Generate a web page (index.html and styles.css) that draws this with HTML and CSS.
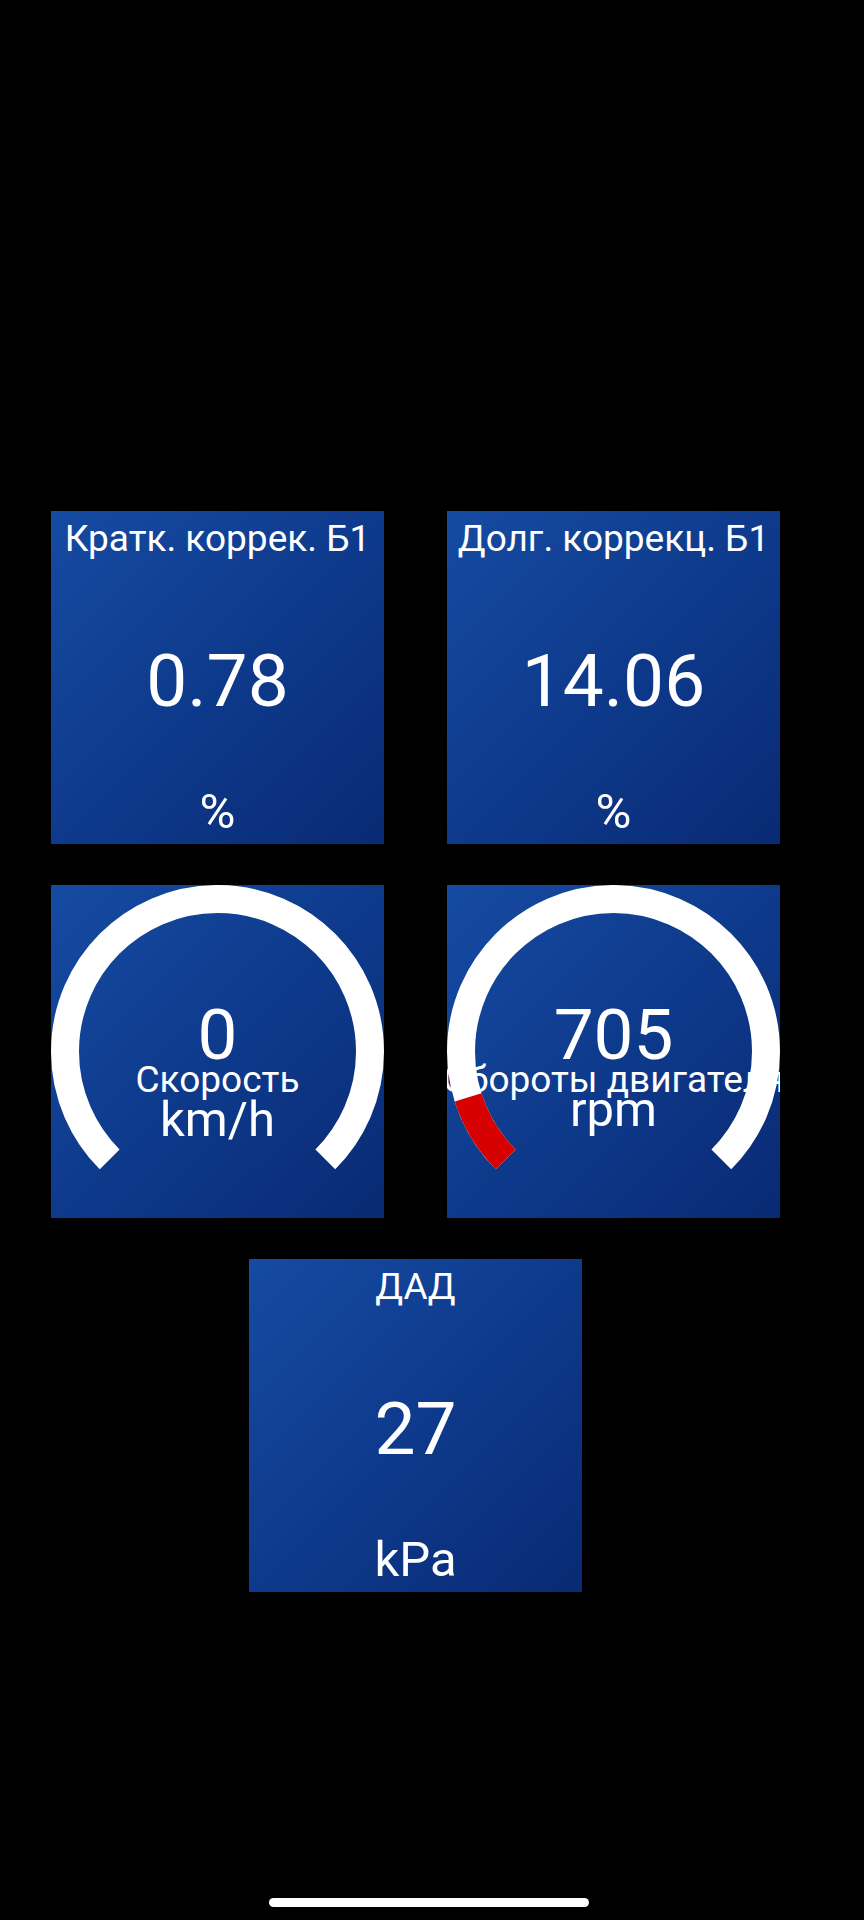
FILE: index.html
```html
<!DOCTYPE html>
<html lang="ru">
<head>
<meta charset="utf-8">
<title>OBD</title>
<link rel="stylesheet" href="styles.css">
</head>
<body>
<main class="screen">
  <section class="grid">
    <div class="tile tile--value">
      <div class="tile__title">Кратк. коррек. Б1</div>
      <div class="tile__value">0.78</div>
      <div class="tile__unit">%</div>
    </div>
    <div class="tile tile--value">
      <div class="tile__title">Долг. коррекц. Б1</div>
      <div class="tile__value">14.06</div>
      <div class="tile__unit">%</div>
    </div>
    <div class="tile tile--gauge">
      <svg class="gauge__svg" viewBox="0 0 333 333" aria-hidden="true">
        <path class="gauge__track" d="M58.67 274.33 A152.5 152.5 0 1 1 274.33 274.33"/>
      </svg>
      <div class="gauge__value">0</div>
      <div class="gauge__label">Скорость</div>
      <div class="gauge__unit">km/h</div>
    </div>
    <div class="tile tile--gauge gauge--rpm">
      <svg class="gauge__svg" viewBox="0 0 333 333" aria-hidden="true">
        <path class="gauge__track" d="M58.67 274.33 A152.5 152.5 0 1 1 274.33 274.33"/>
        <path class="gauge__fill" d="M58.67 274.33 A152.5 152.5 0 0 1 21.1 212.4"/>
      </svg>
      <div class="gauge__value">705</div>
      <div class="gauge__label">Обороты двигателя</div>
      <div class="gauge__unit">rpm</div>
    </div>
    <div class="tile tile--value tile--center">
      <div class="tile__title">ДАД</div>
      <div class="tile__value">27</div>
      <div class="tile__unit">kPa</div>
    </div>
  </section>
  <div class="home-indicator"></div>
</main>
</body>
</html>
```
FILE: styles.css
```css
html, body {
  margin: 0;
  padding: 0;
  background: #000;
}

body {
  font-family: Roboto, "Noto Sans", "Liberation Sans", sans-serif;
  color: #fff;
}

.screen {
  width: 864px;
  height: 1920px;
  overflow: hidden;
  padding-top: 511px;
  box-sizing: border-box;
}

.grid {
  margin-left: 51px;
  width: 729px;
  display: grid;
  grid-template-columns: 333px 333px;
  column-gap: 63px;
  row-gap: 41px;
}

.tile {
  width: 333px;
  height: 333px;
  box-sizing: border-box;
  background: linear-gradient(135deg, #154ba2 0%, #0e3a8c 50%, #092a74 100%);
  overflow: hidden;
}

.tile--center {
  grid-column: 1 / span 2;
  justify-self: center;
}

.tile--value {
  display: flex;
  flex-direction: column;
  align-items: center;
  justify-content: space-between;
  padding: 5px 0 9px;
}

.tile__title {
  font-size: 37px;
  line-height: 46px;
  white-space: nowrap;
}

.tile__value {
  font-size: 73px;
  padding-top: 10px;
}

.tile__unit {
  font-size: 49px;
  line-height: 46px;
}

.tile--gauge {
  position: relative;
  display: flex;
  flex-direction: column;
  align-items: center;
  padding-top: 124px;
}

.gauge__svg {
  position: absolute;
  left: 0;
  top: 0;
  width: 333px;
  height: 333px;
}

.gauge__track {
  fill: none;
  stroke: #fff;
  stroke-width: 28;
}

.gauge__fill {
  fill: none;
  stroke: #d60000;
  stroke-width: 28;
}

.gauge__value,
.gauge__label,
.gauge__unit {
  position: relative;
  white-space: nowrap;
}

.gauge__value {
  font-size: 71px;
  line-height: 52px;
}

.gauge__label {
  font-size: 37px;
  line-height: 37px;
}

.gauge__unit {
  font-size: 49px;
  line-height: 43px;
}

.gauge--rpm .gauge__unit {
  margin-top: -10px;
}

.home-indicator {
  width: 320px;
  height: 9px;
  border-radius: 5px;
  background: #fff;
  margin: 306px 0 0 269px;
}
```
